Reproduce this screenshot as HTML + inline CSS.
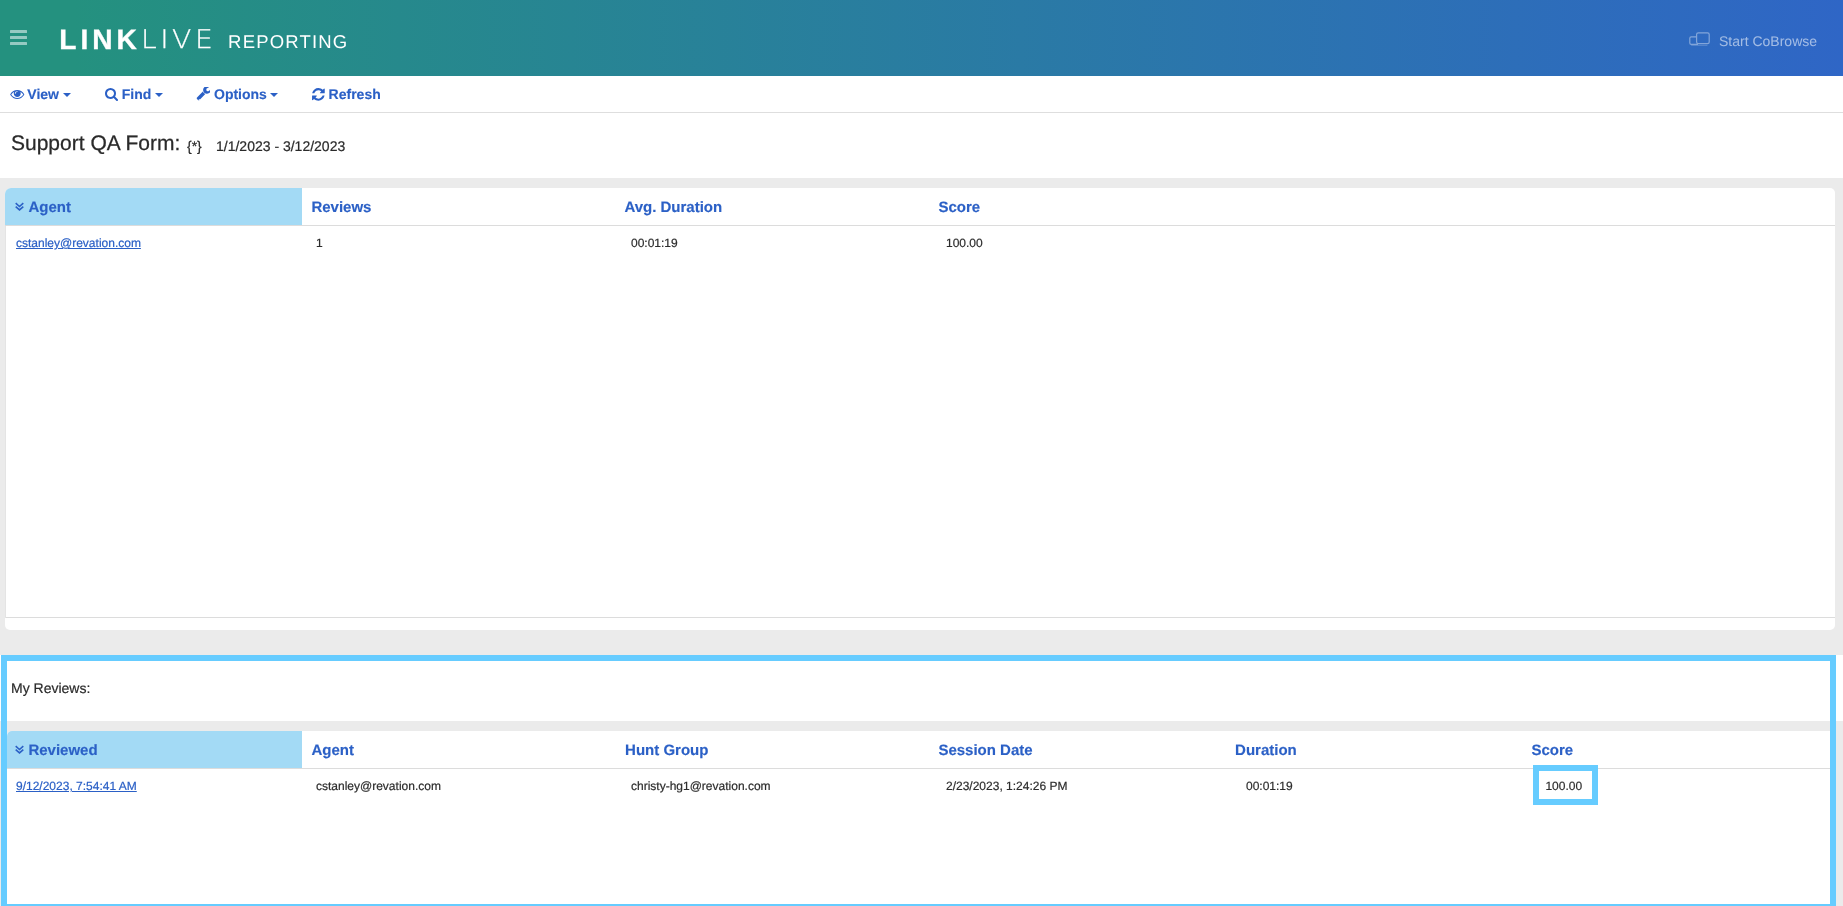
<!DOCTYPE html>
<html lang="en">
<head>
<meta charset="utf-8">
<title>LinkLive Reporting</title>
<style>
*{box-sizing:border-box;margin:0;padding:0}
html,body{width:1843px;height:906px;overflow:hidden;background:#ebebeb;font-family:"Liberation Sans",Arial,Helvetica,sans-serif;color:#222;text-rendering:geometricPrecision}
.abs{position:absolute}
#hdr{position:absolute;left:0;top:0;width:1843px;height:76px;background:linear-gradient(90deg,#24917f 0%,#24917f 4%,#2f66c6 100%)}
#burger{position:absolute;left:10px;top:30px;width:17px;height:15px}
#burger i{position:absolute;left:0;width:17px;height:3px;background:rgba(255,255,255,.52);border-radius:.5px}
.logo{position:absolute;color:#fff;white-space:nowrap;line-height:1}
#nav{position:absolute;left:0;top:76px;width:1843px;height:37px;background:#fff;border-bottom:1px solid #dedede}
.nv{position:absolute;-webkit-text-stroke:.12px;top:0;height:36px;line-height:36px;font-size:14px;font-weight:bold;color:#2b60c6;white-space:nowrap}
.nv svg{position:absolute;fill:#2b60c6}
.caret{position:absolute;width:0;height:0;border-left:4px solid transparent;border-right:4px solid transparent;border-top:4px solid #2b60c6;top:17px}
#title{position:absolute;left:0;top:113px;width:1843px;height:65px;background:#fff}
.panel{position:absolute;background:#fff}
.th{position:absolute;-webkit-text-stroke:.15px;font-size:15px;font-weight:bold;color:#2b60c6;white-space:nowrap;line-height:17px}
.td{position:absolute;font-size:12px;color:#2d2d2d;-webkit-text-stroke:.2px;white-space:nowrap;line-height:14px}
a.td{color:#2b60c6;text-decoration:underline}
.hl{position:absolute;height:1px;background:#dcdcdc}
</style>
</head>
<body>
<div id="root" style="position:absolute;left:0;top:0;width:1843px;height:906px;overflow:hidden;will-change:transform">
<div id="hdr">
  <div id="burger"><i style="top:0"></i><i style="top:6px"></i><i style="top:12px"></i></div>
  <div class="logo" id="lg1" style="left:59.3px;top:25.7px;font-size:28.1px;font-weight:bold;letter-spacing:4.0px;-webkit-text-stroke:.35px #fff">LINK</div>
  <div class="logo" id="lg2" style="left:141px;top:28.3px;font-size:25.7px;font-family:'DejaVu Sans Light','DejaVu Sans',sans-serif;font-weight:200;letter-spacing:3.2px;transform:scaleX(1.1);transform-origin:0 0;-webkit-text-stroke:.25px #fff">LIVE</div>
  <div class="logo" id="lg3" style="left:228.1px;top:33px;font-size:18.5px;letter-spacing:1.18px">REPORTING</div>
  <svg id="cob" class="abs" style="left:1689px;top:32px;opacity:.4" width="22" height="15" viewBox="0 0 22 15" fill="none" stroke="#fff" stroke-width="1.2">
    <rect x="7.6" y="0.8" width="12.6" height="10.9" rx="1.7"/>
    <path d="M7.6 4.9 H2.2 a1.4 1.4 0 0 0 -1.4 1.4 V10.9 a1.4 1.4 0 0 0 1.4 1.4 H9"/>
    <line x1="2.2" y1="13.4" x2="18.4" y2="13.4" stroke-width=".9" opacity=".55"/>
  </svg>
  <div class="abs" id="cobt" style="left:1719px;top:33px;font-size:14px;line-height:16px;color:rgba(255,255,255,.56);white-space:nowrap">Start CoBrowse</div>
</div>

<div id="nav">
  <div class="nv" style="left:10px">
    <svg style="left:0;top:11px" width="14.5" height="14" viewBox="0 0 1792 1792"><path d="M1664 960q-152-236-381-353 61 104 61 225 0 185-131.500 316.500t-316.500 131.500-316.500-131.500-131.500-316.500q0-121 61-225-229 117-381 353 133 205 333.500 326.500t434.500 121.500 434.500-121.500 333.500-326.500zM944 576q0-20-14-34t-34-14q-125 0-214.500 89.500t-89.500 214.500q0 20 14 34t34 14 34-14 14-34q0-86 61-147t147-61q20 0 34-14t14-34zM1792 960q0 34-20 69-140 230-376.500 368.500t-499.500 138.500-499.500-139-376.500-368q-20-35-20-69t20-69q140-229 376.500-368t499.500-139 499.500 139 376.500 368q20 35 20 69z"/></svg>
    <span style="position:absolute;left:17.3px">View</span><b class="caret" style="left:53px"></b>
  </div>
  <div class="nv" style="left:105px">
    <svg style="left:0;top:11px" width="13" height="14" viewBox="0 0 1664 1792"><path d="M1152 832q0-185-131.500-316.500t-316.500-131.500-316.500 131.500-131.500 316.500 131.500 316.500 316.500 131.500 316.500-131.500 131.500-316.500zM1664 1664q0 52-38 90t-90 38q-54 0-90-38l-343-342q-179 124-399 124-143 0-273.500-55.500t-225-150-150-225-55.500-273.500 55.500-273.500 150-225 225-150 273.500-55.500 273.500 55.500 225 150 150 225 55.500 273.500q0 220-124 399l343 343q37 37 37 90z"/></svg>
    <span style="position:absolute;left:16.8px">Find</span><b class="caret" style="left:50px"></b>
  </div>
  <div class="nv" style="left:197px">
    <svg style="left:-0.8px;top:11.3px" width="14.2" height="15.3" viewBox="0 0 1664 1792"><path d="M448 1472q0-26-19-45t-45-19-45 19-19 45 19 45 45 19 45-19 19-45zM1092 828l-682 682q-37 37-90 37-52 0-91-37l-106-108q-38-36-38-90 0-53 38-91l681-681q39 98 114.500 173.500t173.500 114.500zM1726 393q0 39-23 106-47 134-164.500 217.500t-258.500 83.500q-185 0-316.500-131.500t-131.500-316.500 131.500-316.500 316.500-131.500q58 0 121.500 16.500t107.500 46.500q16 11 16 28t-16 28l-293 169v224l193 107q5-3 79-48.500t135.500-81 70.500-35.500q15 0 23.500 10t8.500 25z"/></svg>
    <span style="position:absolute;left:17px">Options</span><b class="caret" style="left:73px"></b>
  </div>
  <div class="nv" style="left:312px">
    <svg style="left:0;top:10.6px" width="12.8" height="14.8" viewBox="0 0 1536 1792"><path d="M1511 1056q0 5-1 7-64 268-268 434.500t-478 166.500q-146 0-282.500-55t-243.500-157l-129 129q-19 19-45 19t-45-19-19-45v-448q0-26 19-45t45-19h448q26 0 45 19t19 45-19 45l-137 137q71 66 161 102t187 36q134 0 250-65t186-179q11-17 53-117 8-23 30-23h192q13 0 22.500 9.500t9.500 22.500zM1536 256v448q0 26-19 45t-45 19h-448q-26 0-45-19t-19-45 19-45l138-138q-148-137-349-137-134 0-250 65t-186 179q-11 17-53 117-8 23-30 23h-199q-13 0-22.500-9.500t-9.500-22.500v-7q65-268 270-434.500t480-166.500q146 0 284 55.500t245 156.500l130-129q19-19 45-19t45 19 19 45z"/></svg>
    <span style="position:absolute;left:16.6px">Refresh</span>
  </div>
</div>

<div id="title">
  <span class="abs" id="t1" style="-webkit-text-stroke:.25px;left:11px;top:19px;font-size:21px;line-height:24px;white-space:nowrap;color:#2a2a2a">Support QA Form:</span>
  <span class="abs" id="t2" style="-webkit-text-stroke:.2px;left:187px;top:25px;font-size:14px;line-height:16px;white-space:nowrap;color:#2a2a2a">{*}</span>
  <span class="abs" id="t3" style="-webkit-text-stroke:.2px;left:216px;top:25px;font-size:14px;line-height:16px;white-space:nowrap;color:#2a2a2a">1/1/2023 - 3/12/2023</span>
</div>

<!-- panel 1 -->
<div class="panel" id="p1" style="left:5px;top:188px;width:1830px;height:442px;border-radius:6px 5px 5px 5px">
  <div class="abs" style="left:0;top:0;width:297px;height:37px;background:#a3daf5;border-top-left-radius:6px"></div>
  <div class="hl" style="left:0;top:37px;width:1830px"></div>
  <div class="hl" style="left:0;top:429px;width:1830px"></div>
  <div class="abs" style="left:0;top:38px;width:1px;height:392px;background:#e4e4e4"></div>
  <svg class="abs" style="left:10.2px;top:13.8px" width="9" height="9" viewBox="0 0 9 9" fill="none" stroke="#2b60c6" stroke-width="1.6"><path d="M0.7 1.2 L4.5 4.5 L8.3 1.2 M0.7 4.6 L4.5 7.9 L8.3 4.6"/></svg>
  <div class="th" style="left:23.4px;top:11px">Agent</div>
  <div class="th" style="left:306.4px;top:11px">Reviews</div>
  <div class="th" style="left:619.4px;top:11px">Avg. Duration</div>
  <div class="th" style="left:933.4px;top:11px">Score</div>
  <a class="td" style="left:11px;top:48px">cstanley@revation.com</a>
  <div class="td" style="left:311px;top:48px">1</div>
  <div class="td" style="left:626px;top:48px">00:01:19</div>
  <div class="td" style="left:941px;top:48px">100.00</div>
</div>

<!-- panel 2 -->
<div class="abs" style="left:0;top:655px;width:1843px;height:66px;background:#fff"></div>
<div class="abs" style="left:7px;top:731px;width:1823px;height:175px;background:#fff;border-top-left-radius:5px"></div>
<div class="abs" id="mr" style="-webkit-text-stroke:.2px;left:11px;top:680px;font-size:14px;line-height:16px;color:#2a2a2a;white-space:nowrap">My Reviews:</div>
<div class="abs" style="left:7px;top:731px;width:295px;height:37px;background:#a3daf5;border-top-left-radius:5px"></div>
<div class="hl" style="left:7px;top:768px;width:1823px"></div>
<svg class="abs chev" style="left:15.2px;top:744.8px" width="9" height="9" viewBox="0 0 9 9" fill="none" stroke="#2b60c6" stroke-width="1.6"><path d="M0.7 1.2 L4.5 4.5 L8.3 1.2 M0.7 4.6 L4.5 7.9 L8.3 4.6"/></svg>
<div class="th" style="left:28.4px;top:742px">Reviewed</div>
<div class="th" style="left:311.4px;top:742px">Agent</div>
<div class="th" style="left:625.1px;top:742px">Hunt Group</div>
<div class="th" style="left:938.4px;top:742px">Session Date</div>
<div class="th" style="left:1235.1px;top:742px">Duration</div>
<div class="th" style="left:1531.4px;top:742px">Score</div>
<a class="td" style="left:16px;top:779px">9/12/2023, 7:54:41 AM</a>
<div class="td" style="left:316px;top:779px">cstanley@revation.com</div>
<div class="td" style="left:631px;top:779px">christy-hg1@revation.com</div>
<div class="td" style="left:946px;top:779px">2/23/2023, 1:24:26 PM</div>
<div class="td" style="left:1246px;top:779px">00:01:19</div>
<div class="abs" id="scb" style="left:1533px;top:765px;width:65px;height:40px;border:6px solid #66ccff;background:#fff"></div>
<div class="td" style="left:1545.4px;top:779px">100.00</div>
<div class="abs" id="p2b" style="left:1px;top:655px;width:1835px;height:255px;border:6px solid #66ccff"></div>
</div>
</body>
</html>
